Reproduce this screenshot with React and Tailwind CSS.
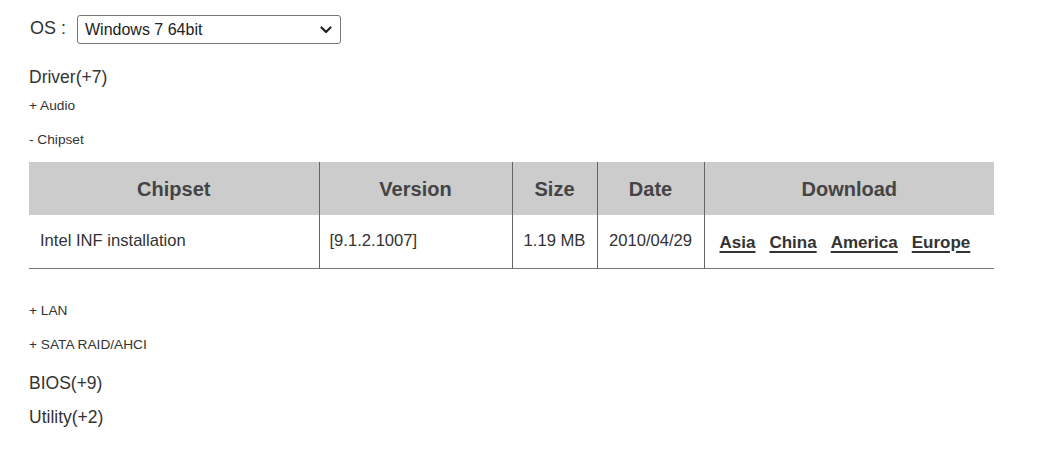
import React, { useState } from 'react';

const rows = [
  {
    name: 'Intel INF installation',
    version: '[9.1.2.1007]',
    size: '1.19 MB',
    date: '2010/04/29',
  },
];

function ChevronDown() {
  return (
    <svg width="12" height="8" viewBox="0 0 12 8" fill="none">
      <path d="M1.5 1.5 L6 6 L10.5 1.5" stroke="#222" strokeWidth="2.2" strokeLinecap="round" strokeLinejoin="round" />
    </svg>
  );
}

export default function App() {
  const [os, setOs] = useState('Windows 7 64bit');

  return (
    <div className="min-h-screen bg-white pl-[29px] pt-[15px] text-[#333] font-['Liberation_Sans',Arial,sans-serif]">
      <div className="flex h-[29px] items-center">
        <span className="w-[48px] pl-[1px] text-[18px] leading-none -mt-[4px]">OS :</span>
        <div className="relative">
          <select
            value={os}
            onChange={(e) => setOs(e.target.value)}
            className="h-[29px] w-[264px] appearance-none rounded-[3px] border border-[#777] bg-white pl-[7px] text-[16px] text-[#222] outline-none"
          >
            <option>Windows 7 64bit</option>
            <option>Windows 7 32bit</option>
            <option>Windows XP</option>
          </select>
          <span className="pointer-events-none absolute right-[9px] top-[11px]">
            <ChevronDown />
          </span>
        </div>
      </div>

      <div className="mt-[21px] text-[17.5px] leading-[24px]">Driver(+7)</div>
      <div className="mt-[7px] text-[13.7px] leading-[20px]">+ Audio</div>
      <div className="mt-[14px] text-[13.7px] leading-[20px]">- Chipset</div>

      <table className="mt-[12px] w-[965px] border-collapse table-fixed">
        <thead>
          <tr className="h-[53px] bg-[#cccccc] text-[20px] font-bold text-[#444]">
            <th className="w-[290px] border-r border-[#666]">Chipset</th>
            <th className="w-[193px] border-r border-[#666]">Version</th>
            <th className="w-[85px] border-r border-[#666]">Size</th>
            <th className="w-[107px] border-r border-[#666]">Date</th>
            <th className="w-[290px]">Download</th>
          </tr>
        </thead>
        <tbody>
          {rows.map((r) => (
            <tr key={r.name} className="h-[53px] border-b border-[#777] text-[16.6px] text-[#333]">
              <td className="border-r border-[#666] pl-[11px]">{r.name}</td>
              <td className="border-r border-[#666] pl-[10px]">{r.version}</td>
              <td className="border-r border-[#666] text-center">{r.size}</td>
              <td className="border-r border-[#666] text-center">{r.date}</td>
              <td className="pl-[15px]">
                <div className="mt-[2px] flex gap-[14px] text-[17px] font-bold">
                  {['Asia', 'China', 'America', 'Europe'].map((l) => (
                    <a key={l} href="#" className="underline underline-offset-[3px] decoration-[2px] text-[#333]">
                      {l}
                    </a>
                  ))}
                </div>
              </td>
            </tr>
          ))}
        </tbody>
      </table>

      <div className="mt-[32px] text-[13.7px] leading-[20px]">+ LAN</div>
      <div className="mt-[14px] text-[13.7px] leading-[20px]">+ SATA RAID/AHCI</div>
      <div className="mt-[16px] text-[17.5px] leading-[24px]">BIOS(+9)</div>
      <div className="mt-[10px] text-[17.5px] leading-[24px]">Utility(+2)</div>
    </div>
  );
}
